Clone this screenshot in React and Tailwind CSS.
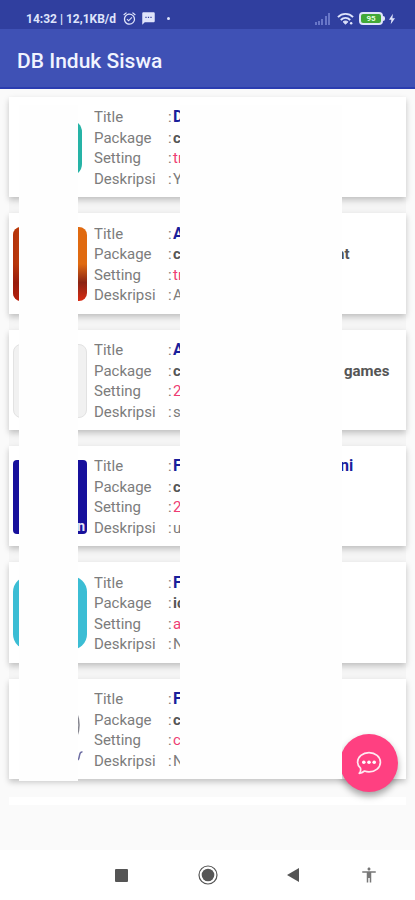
import React from "react";
import { MdAccessibility, MdAlarmOn, MdTextsms } from "react-icons/md";

const apps = [
  {
    thumb: "mx-[6px] h-[56px] w-[63px] rounded-xl bg-[#26b3a6]",
    title: "D",
    pkg: "c",
    setting: "tr",
    desc: "Y",
  },
  {
    thumb: "h-[74px] w-[74px] rounded-lg bg-linear-to-b from-[#e06a10] from-50% via-[#8c2413] via-75% to-[#d82a12]",
    shade: true,
    title: "A",
    pkg: "c",
    pkgEnd: "nt",
    setting: "tr",
    desc: "A",
  },
  {
    thumb: "h-[74px] w-[74px] rounded-lg border border-[#e2e2e2] bg-[#f1f1f1]",
    title: "A",
    pkg: "c",
    pkgEnd: "games",
    setting: "2",
    desc: "s",
  },
  {
    thumb: "h-[74px] w-[74px] rounded-sm bg-[#17109c]",
    mark: "n",
    title: "F",
    titleEnd: "ni",
    pkg: "c",
    setting: "2",
    desc: "u",
  },
  {
    thumb: "h-[74px] w-[74px] rounded-2xl bg-[#3bbdd4]",
    title: "F",
    pkg: "ic",
    setting: "a",
    desc: "N",
  },
  {
    thumb: "h-[74px] w-[74px]",
    ring: true,
    title: "F",
    pkg: "c",
    setting: "c",
    desc: "N",
  },
];

const StatusBar = () => (
  <div className="flex h-[29px] items-center bg-[#303f9f] pt-2 pr-5 pl-[26px] text-[12px] font-bold text-[#dfe4fb]">
    <span className="whitespace-nowrap">14:32 | 12,1KB/d</span>
    <MdAlarmOn className="ml-[6px] size-[15px]" />
    <MdTextsms className="ml-1 size-[15px]" />
    <span className="ml-[11px] size-[3px] rounded-full bg-[#dfe4fb]" />

    <svg className="ml-auto h-3 w-4" viewBox="0 0 16 12" fill="#6876c8">
      <rect x="0" y="9" width="2" height="3" />
      <rect x="3" y="8" width="2" height="4" />
      <rect x="6" y="6" width="2" height="6" />
      <rect x="10" y="3" width="2" height="9" />
      <rect x="13" y="0" width="2" height="12" />
    </svg>
    <svg className="ml-[6px] h-[14px] w-[17px]" viewBox="0 0 18 14" fill="none" stroke="#dfe4fb" strokeWidth="2">
      <path d="M1 5c4.500-4.500 11.500-4.500 16 0" />
      <path d="M4 8c3-2.800 7-2.800 10 0" />
      <path d="M6.500 10c1.500-1.200 3.500-1.200 5 0L9 12.500z" fill="#dfe4fb" strokeWidth="1" />
      <circle cx="15" cy="11.500" r="1.300" fill="#dfe4fb" stroke="none" />
    </svg>
    <span className="ml-[5px] flex h-[13px] w-6 items-center justify-center rounded-[4px] border-2 border-[#dfe4fb] bg-[#42a838] text-[8px] leading-none text-[#e4ffdc]">
      95
    </span>
    <span className="h-[5px] w-[2px] rounded-r-sm bg-[#dfe4fb]" />
    <svg className="ml-1 h-3 w-[6px]" viewBox="0 0 7 12" fill="#dfe4fb">
      <path d="M4.500 0L0 7h2.800L2 12l5-7H4z" />
    </svg>
  </div>
);

const Row = ({ label, value, valueClass, end, endClass }) => (
  <div className="grid grid-cols-[74px_5px_auto_1fr] items-center overflow-hidden text-[15px] leading-5 text-[#7c7c7c]">
    <dt>{label}</dt>
    <span>:</span>
    <dd className={`w-[163px] ${valueClass}`}>{value}</dd>
    {end && <span className={`${valueClass} ${endClass}`}>{end}</span>}
  </div>
);

const Thumb = ({ app }) => (
  <div className={`flex items-end justify-end overflow-hidden ${app.thumb}`}>
    {app.shade && (
      <div className="h-full w-full bg-linear-to-r from-[#a01808]/70 to-transparent to-50%" />
    )}
    {app.mark && (
      <span className="pr-[2px] text-[14px] leading-4 font-bold text-[#e4e4f8]">{app.mark}</span>
    )}
    {app.ring && (
      <svg className="size-full" viewBox="0 0 74 74" fill="none">
        <circle cx="37" cy="32" r="29" stroke="#85858f" strokeWidth="1.500" />
        <path d="M69.500 59c-2.500-.5-2.500 1.500-3 3.500s-.5 3.500-1.500 4.500" stroke="#6f6fa4" strokeWidth="1.500" />
      </svg>
    )}
  </div>
);

const AppCard = ({ app }) => (
  <li className="flex flex-1 items-center bg-white pt-[10px] pb-2 pl-1 shadow-[0_3px_6px_rgba(0,0,0,0.22)]">
    <div className="flex w-[81px] shrink-0">
      <Thumb app={app} />
    </div>
    <dl className="grid flex-1 grid-rows-4 self-stretch">
      <Row
        label="Title"
        value={app.title}
        valueClass="text-[16px] font-bold text-[#1a1f9c]"
        end={app.titleEnd}
        endClass="pl-1"
      />
      <Row
        label="Package"
        value={app.pkg}
        valueClass="font-bold text-[#555555]"
        end={app.pkgEnd}
        endClass={app.pkgEnd === "games" ? "pl-2" : ""}
      />
      <Row label="Setting" value={app.setting} valueClass="text-[#ee3d74]" />
      <Row label="Deskripsi" value={app.desc} valueClass="text-[#7c7c7c]" />
    </dl>
  </li>
);

const NavBar = () => (
  <nav className="flex h-[50px] items-center bg-white text-[#555555]">
    <button aria-label="Recent apps" className="ml-[115px]">
      <svg className="size-[13px]" viewBox="0 0 13 13" fill="currentColor">
        <rect width="13" height="13" rx="1" />
      </svg>
    </button>
    <button aria-label="Home" className="ml-[70px]">
      <svg className="size-[20px]" viewBox="0 0 20 20">
        <circle cx="10" cy="10" r="9" fill="none" stroke="currentColor" strokeWidth="1.200" />
        <circle cx="10" cy="10" r="6.300" fill="currentColor" />
      </svg>
    </button>
    <button aria-label="Back" className="ml-[69px]">
      <svg className="h-[14px] w-3" viewBox="0 0 12 14" fill="currentColor">
        <path d="M12 0v14L0 7z" />
      </svg>
    </button>
    <button aria-label="Accessibility" className="ml-[61px] text-[#777777]">
      <MdAccessibility className="size-[18px]" />
    </button>
  </nav>
);

export default function App() {
  return (
    <div className="flex min-h-screen flex-col bg-[#fafafa] font-['Roboto',sans-serif]">
      <StatusBar />
      <header className="flex h-[60px] items-center border-b-2 border-[#2b3db0] bg-[#3f51b5] px-[17px] pt-2">
        <h1 className="text-[21px] font-medium text-[#f1f4ff]">DB Induk Siswa</h1>
      </header>

      <main className="relative flex flex-1 flex-col px-[9px] pt-2">
        <div className="relative flex flex-1 flex-col">
          <ul className="flex flex-1 flex-col gap-4 bg-[#f5f5f5]">
            {apps.map((app, i) => (
              <AppCard key={i} app={app} />
            ))}
          </ul>

          {/* Chat button */}
          <button
            aria-label="Chat"
            className="absolute right-2 -bottom-[13px] flex size-[58px] items-center justify-center rounded-full bg-[#ff4081] shadow-[0_4px_7px_rgba(0,0,0,0.35)]"
          >
            <svg className="size-[26px]" viewBox="0 0 26 26" fill="none" stroke="#ffe9f1" strokeWidth="1.700" strokeLinejoin="round">
              <path d="M4.500 18.200C2.700 16.500 1.600 14.500 1.600 12.200 1.600 6.700 6.700 2.600 13 2.600s11.400 4.100 11.400 9.600-5.100 9.600-11.400 9.600c-1.600 0-3.100-.3-4.500-.8-1.400 1.200-3 2.200-5.300 2.300 1.200-1.300 1.800-3 1.300-5.100z" />
              <g fill="#ffffff" stroke="none">
                <circle cx="7.800" cy="12.200" r="1.800" />
                <circle cx="13" cy="12.200" r="1.800" />
                <circle cx="18.200" cy="12.200" r="1.800" />
              </g>
            </svg>
          </button>

          {/* White strips that hide private data */}
          <div className="absolute top-2 -bottom-[2px] left-[10px] w-[59px] bg-[#fefefe]" />
          <div className="absolute top-2 bottom-0 left-[171px] w-[162px] bg-[#fefefe]" />
        </div>
        <div className="mt-[18px] mb-[45px] h-2 bg-white" />
      </main>

      <NavBar />
    </div>
  );
}
